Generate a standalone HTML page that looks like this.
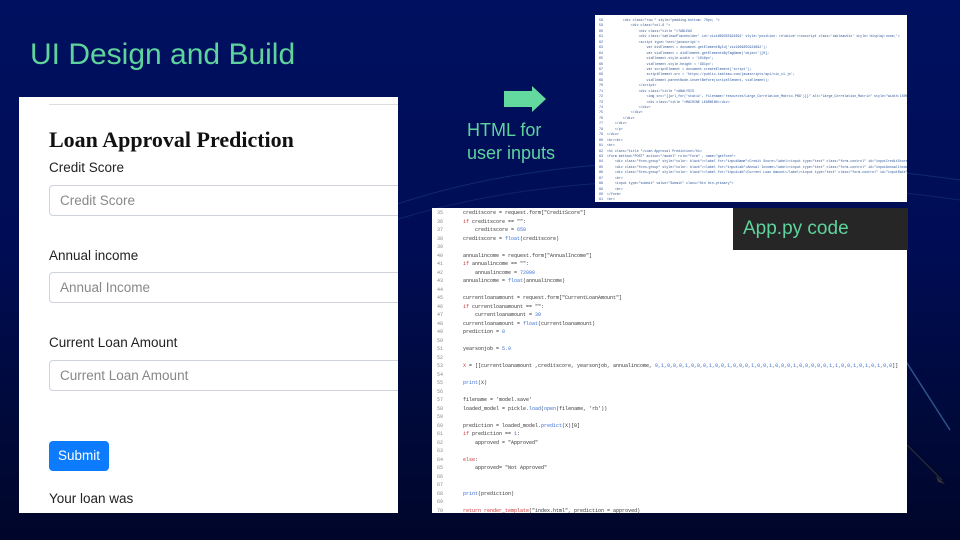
<!DOCTYPE html>
<html><head><meta charset="utf-8"><style>
*{margin:0;padding:0;box-sizing:border-box}
body{width:960px;height:540px;overflow:hidden;position:relative;font-family:"Liberation Sans",sans-serif;
background:linear-gradient(180deg,#001060 0%,#000d55 45%,#000a3c 75%,#00062a 100%);}
.abs{position:absolute}
.title{left:30px;top:38px;font-size:30px;color:#5fd39c;}
.panel{left:19px;top:97px;width:379px;height:416px;background:#fff;overflow:hidden}
.lbl{position:absolute;left:30px;font-size:13.5px;color:#222}
.inp{position:absolute;left:30px;width:360px;height:31px;border:1px solid #ced4da;border-radius:4px;font-size:13.5px;color:#888;padding:7px 10px}
.code{font-family:"Liberation Mono",monospace;color:#333}
.code div{height:8.5px;line-height:8.5px;font-size:5px;white-space:pre}
.code span.n{display:inline-block;width:26px;color:#888}
.k{color:#c33}.b{color:#3a6fd0}
.top div{height:5.45px;line-height:5.45px;font-size:3.3px;color:#2a5599}
</style></head><body>
<svg class="abs" style="left:0;top:0" width="960" height="540">
<path d="M380 210 Q600 130 960 180" stroke="#1a3a80" stroke-width="1" fill="none" opacity=".6"/>
<path d="M380 225 Q600 150 960 200" stroke="#1a3a80" stroke-width="1" fill="none" opacity=".5"/>
<line x1="905" y1="360" x2="950" y2="430" stroke="#30508a" stroke-width="1.5"/>
<line x1="907" y1="445" x2="942" y2="480" stroke="#333" stroke-width="1"/>
<path d="M936 476 L945 484 L938 482Z" fill="#333"/>
<path d="M504 91 L532 91 L532 86 L546 99 L532 112 L532 107 L504 107Z" fill="#63d9a0"/>
</svg>
<div class="abs title">UI Design and Build</div>
<div class="abs" style="left:467px;top:119px;font-size:18px;color:#5fd39c;line-height:23px">HTML for<br>user inputs</div>

<div class="abs panel">
 <div class="abs" style="left:30px;top:7px;width:360px;border-top:1px solid #ddd"></div>
 <div class="abs" style="left:30px;top:30px;font-family:'Liberation Serif',serif;font-weight:bold;font-size:22px;color:#111">Loan Approval Prediction</div>
 <div class="lbl" style="top:63px">Credit Score</div>
 <div class="inp" style="top:88px">Credit Score</div>
 <div class="lbl" style="top:151px">Annual income</div>
 <div class="inp" style="top:175px">Annual Income</div>
 <div class="lbl" style="top:238px">Current Loan Amount</div>
 <div class="inp" style="top:263px">Current Loan Amount</div>
 <div class="abs" style="left:30px;top:344px;width:60px;height:30px;background:#0d7bfd;border-radius:4px;color:#fff;font-size:13.5px;text-align:center;line-height:30px">Submit</div>
 <div class="lbl" style="top:394px">Your loan was</div>
</div>

<div class="abs code top" style="left:595px;top:15px;width:312px;height:187px;background:#fff;overflow:hidden;padding:3px 0 0 4px"><div>58          &lt;div class="row " style="padding-bottom: 70px; "&gt;</div><div>59              &lt;div class="col-6 "&gt;</div><div>60                  &lt;div class="title "&gt;TABLEAU</div><div>61                  &lt;div class='tableauPlaceholder' id='viz1669355924692' style='position: relative'&gt;&lt;noscript class='tableauViz' style='display:none;'&gt;</div><div>62                  &lt;script type='text/javascript'&gt;</div><div>63                      var divElement = document.getElementById('viz1669355924692');</div><div>64                      var vizElement = divElement.getElementsByTagName('object')[0];</div><div>65                      vizElement.style.width = '1016px';</div><div>66                      vizElement.style.height = '991px';</div><div>67                      var scriptElement = document.createElement('script');</div><div>68                      scriptElement.src = 'https://public.tableau.com/javascripts/api/viz_v1.js';</div><div>69                      vizElement.parentNode.insertBefore(scriptElement, vizElement);</div><div>70                  &lt;/script&gt;</div><div>71                  &lt;div class="title "&gt;ANALYSIS</div><div>72                      &lt;img src="{{url_for('static', filename='resources/Large_Correlation_Matrix.PNG')}}" alt="Large_Correlation_Matrix" style="width:150%"&gt;</div><div>73                      &lt;div class="title "&gt;MACHINE LEARNING&lt;/div&gt;</div><div>74                  &lt;/div&gt;</div><div>75              &lt;/div&gt;</div><div>76          &lt;/div&gt;</div><div>77      &lt;/div&gt;</div><div>78      &lt;/p&gt;</div><div>79  &lt;/div&gt;</div><div>80  &lt;br&gt;&lt;br&gt;</div><div>81  &lt;br&gt;</div><div>82  &lt;h1 class="title "&gt;Loan Approval Prediction&lt;/h1&gt;</div><div>83  &lt;form method="POST" action="/model" role="form" , name="getForm"&gt;</div><div>84      &lt;div class="form-group" style="color: black"&gt;&lt;label for="inputName"&gt;Credit Score&lt;/label&gt;&lt;input type="text" class="form-control" id="inputCreditScore"&gt;</div><div>85      &lt;div class="form-group" style="color: black"&gt;&lt;label for="inputLab"&gt;Annual Income&lt;/label&gt;&lt;input type="text" class="form-control" id="inputAnnualIncome"&gt;</div><div>86      &lt;div class="form-group" style="color: black"&gt;&lt;label for="inputLab"&gt;Current Loan Amount&lt;/label&gt;&lt;input type="text" class="form-control" id="inputRate"&gt;</div><div>87      &lt;br&gt;</div><div>88      &lt;input type="submit" value="Submit" class="btn btn-primary"&gt;</div><div>89      &lt;br&gt;</div><div>90  &lt;/form&gt;</div><div>91  &lt;br&gt;</div><div>92  &lt;div style="color: black"&gt; Your loan was {{prediction}}</div></div>

<div class="abs code" style="left:432px;top:208px;width:475px;height:305px;background:#fff;overflow:hidden;padding:1px 0 0 5px"><div><span class="n">35</span>creditscore = request.form["CreditScore"]</div><div><span class="n">36</span><span class="k">if</span> creditscore == "":</div><div><span class="n">37</span>    creditscore = <span class="b">650</span></div><div><span class="n">38</span>creditscore = <span class="b">float</span>(creditscore)</div><div><span class="n">39</span></div><div><span class="n">40</span>annualincome = request.form["AnnualIncome"]</div><div><span class="n">41</span><span class="k">if</span> annualincome == "":</div><div><span class="n">42</span>    annualincome = <span class="b">72000</span></div><div><span class="n">43</span>annualincome = <span class="b">float</span>(annualincome)</div><div><span class="n">44</span></div><div><span class="n">45</span>currentloanamount = request.form["CurrentLoanAmount"]</div><div><span class="n">46</span><span class="k">if</span> currentloanamount == "":</div><div><span class="n">47</span>    currentloanamount = <span class="b">30</span></div><div><span class="n">48</span>currentloanamount = <span class="b">float</span>(currentloanamount)</div><div><span class="n">49</span>prediction = <span class="b">0</span></div><div><span class="n">50</span></div><div><span class="n">51</span>yearsonjob = <span class="b">5.9</span></div><div><span class="n">52</span></div><div><span class="n">53</span><span class="k">X</span> = [[currentloanamount ,creditscore, yearsonjob, annualincome, <span class="b">0,1,0,0,0,1,0,0,0,1,0,0,1,0,0,0,1,0,0,1,0,0,0,1,0,0,0,0,0,1,1,0,0,1,0,1,0,1,0,0</span>]]</div><div><span class="n">54</span></div><div><span class="n">55</span><span class="b">print</span>(X)</div><div><span class="n">56</span></div><div><span class="n">57</span>filename = 'model.save'</div><div><span class="n">58</span>loaded_model = pickle.<span class="b">load</span>(<span class="b">open</span>(filename, 'rb'))</div><div><span class="n">59</span></div><div><span class="n">60</span>prediction = loaded_model.<span class="b">predict</span>(X)[0]</div><div><span class="n">61</span><span class="k">if</span> prediction == <span class="b">1</span>:</div><div><span class="n">62</span>    approved = "Approved"</div><div><span class="n">63</span></div><div><span class="n">64</span><span class="k">else</span>:</div><div><span class="n">65</span>    approved= "Not Approved"</div><div><span class="n">66</span></div><div><span class="n">67</span></div><div><span class="n">68</span><span class="b">print</span>(prediction)</div><div><span class="n">69</span></div><div><span class="n">70</span><span class="k">return</span> <span class="k">render_template</span>("index.html", prediction = approved)</div></div>
<div class="abs" style="left:733px;top:208px;width:175px;height:42px;background:#262626;color:#5fd39c;font-size:19px;padding:10px 0 0 10px">App.py code</div>
</body></html>
